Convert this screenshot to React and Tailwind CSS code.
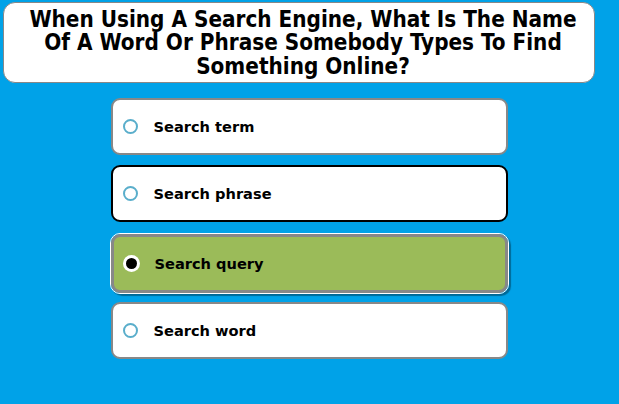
export default function App() {
  const opts = [
    { t: "Search term", s: "normal" },
    { t: "Search phrase", s: "hover" },
    { t: "Search query", s: "selected" },
    { t: "Search word", s: "normal" },
  ];
  return (
    <div className="w-[619px] h-[404px] bg-[#00a2e8] overflow-hidden">
      <div className="pt-[2px] pl-[3px]">
        <div
          className="w-[592px] h-[81px] bg-white border-[1.5px] border-[#888] rounded-[12px] flex items-center justify-center pl-[8px] text-center text-black font-bold text-[22.3px] leading-[23.5px]"
          style={{ fontFamily: '"DejaVu Sans Condensed", "DejaVu Sans", sans-serif' }}
        >
          <div className="mt-[1px]">
            When Using A Search Engine, What Is The Name
            <br />
            Of A Word Or Phrase Somebody Types To Find
            <br />
            Something Online?
          </div>
        </div>
      </div>
      <div className="flex flex-col items-center mt-[15px] ml-[-1px]">
        {opts.map((o, i) => (
          <Option key={i} {...o} />
        ))}
      </div>
    </div>
  );
}

function Option({ t, s }) {
  const font = { fontFamily: '"DejaVu Sans", Verdana, sans-serif' };
  if (s === "selected") {
    return (
      <div className="mt-[11px] mb-[8px] rounded-[10px] border border-white shadow-[2px_2px_1px_rgba(0,0,0,0.35)]">
        <div className="w-[397px] h-[59px] rounded-[9px] border-[3px] border-[#888] bg-[#9bbb59] flex items-center pl-[9px]">
          <span className="w-[17px] h-[17px] rounded-full bg-white flex items-center justify-center">
            <span className="w-[11px] h-[11px] rounded-full bg-black" />
          </span>
          <span className="ml-[15px] font-bold text-[14.6px] text-black" style={font}>
            {t}
          </span>
        </div>
      </div>
    );
  }
  return (
    <div
      className={
        "w-[397px] h-[57px] rounded-[9px] bg-white flex items-center pl-[10px] " +
        (s === "hover" ? "border-2 border-black mt-[10px]" : "border-2 border-[#888] mt-0")
      }
    >
      <span className="w-[15px] h-[15px] rounded-full border-2 border-[#5aaecb]" />
      <span className="ml-[16px] font-bold text-[14.6px] text-black" style={font}>
        {t}
      </span>
    </div>
  );
}
